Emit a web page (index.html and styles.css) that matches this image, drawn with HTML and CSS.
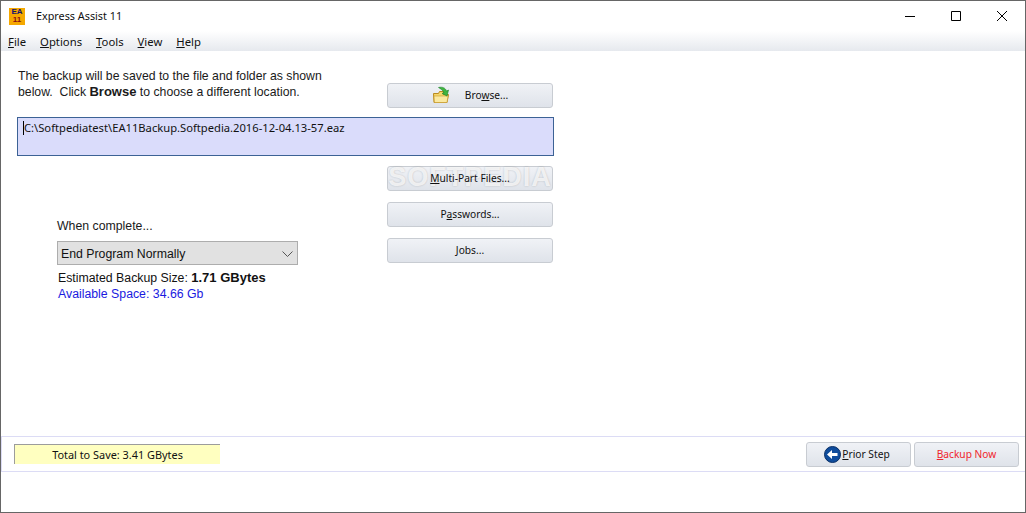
FILE: index.html
```html
<!DOCTYPE html>
<html lang="en">
<head>
<meta charset="utf-8">
<title>Express Assist 11</title>
<link rel="stylesheet" href="styles.css">
</head>
<body>
<div class="window">
  <header class="titlebar">
    <div class="logo"><span>EA</span><span class="logo-num">11</span></div>
    <div class="title">Express Assist 11</div>
    <div class="controls">
      <svg class="ctl" width="46" height="30" viewBox="0 0 46 30"><path d="M18 15.500h10" stroke="#000" fill="none"/></svg>
      <svg class="ctl" width="46" height="30" viewBox="0 0 46 30"><path d="M18.500 10.500h9v9h-9z" stroke="#000" fill="none"/></svg>
      <svg class="ctl" width="46" height="30" viewBox="0 0 46 30"><path d="M18 10l10 10M28 10l-10 10" stroke="#000" fill="none"/></svg>
    </div>
  </header>
  <nav class="menubar">
    <span class="menu"><u>F</u>ile</span>
    <span class="menu"><u>O</u>ptions</span>
    <span class="menu"><u>T</u>ools</span>
    <span class="menu"><u>V</u>iew</span>
    <span class="menu"><u>H</u>elp</span>
  </nav>
  <main class="main">
    <p class="intro">The backup will be saved to the file and folder as shown<br>below.&nbsp; Click <b>Browse</b> to choose a different location.</p>
    <button class="btn btn-browse">
      <svg class="folder" width="18" height="18" viewBox="0 0 18 18">
        <path d="M1.500 7.500h5l1-2h4v3h5l-1.500 8h-13z" fill="#f6d66a" stroke="#b98a1e"/>
        <path d="M2 10h14l-1 6.500H2.500z" fill="#fbe9a0" stroke="#c79a2c" stroke-width=".6"/>
        <path d="M6.500 1.500c4 -1 7 .5 8 3.500l2-1-1.500 6-5-2.500 2-1c-1-2-3-3.500-5.500-5z" fill="#3fb53f" stroke="#1f7f2a" stroke-width=".6"/>
      </svg>
      <span>Bro<u>w</u>se...</span>
    </button>
    <div class="path"><span class="caret"></span>C:\Softpediatest\EA11Backup.Softpedia.2016-12-04.13-57.eaz</div>
    <section class="options">
      <div class="when">When complete...</div>
      <div class="select"><span>End Program Normally</span>
        <svg width="11" height="6" viewBox="0 0 11 6"><path d="M.500 .500l5 5 5-5" stroke="#555" fill="none"/></svg>
      </div>
      <div class="size">Estimated Backup Size: <b>1.71 GBytes</b></div>
      <div class="space">Available Space: 34.66 Gb</div>
    </section>
    <div class="btn-stack">
      <button class="btn"><span class="label"><u>M</u>ulti-Part Files...</span></button>
      <button class="btn"><span class="label">P<u>a</u>sswords...</span></button>
      <button class="btn"><span class="label"><u>J</u>obs...</span></button>
      <div class="watermark">SOFTPEDIA</div>
    </div>
  </main>
  <footer class="footer">
    <div class="total">Total to Save: 3.41 GBytes</div>
    <div class="actions">
      <button class="btn btn-foot">
        <svg width="17" height="17" viewBox="0 0 17 17">
          <circle cx="8.500" cy="8.500" r="8" fill="#0f4c9c" stroke="#0a2f66"/>
          <path d="M3 8.500L8 4v3h5.500v3H8v3z" fill="#fff"/>
        </svg>
        <span><u>P</u>rior Step</span>
      </button>
      <button class="btn btn-foot btn-red"><span><u>B</u>ackup Now</span></button>
    </div>
  </footer>
  <div class="bottom"></div>
</div>
</body>
</html>
```
FILE: styles.css
```css
* { box-sizing: border-box; }
html, body { margin: 0; padding: 0; height: 100%; }
body { background: #fff; overflow: hidden; }
.window {
  width: 1026px; height: 513px;
  border: 1px solid #666;
  display: flex; flex-direction: column;
  font-family: "Noto Sans", sans-serif;
  font-size: 11px; color: #111;
  background: #fff;
}
.titlebar { height: 30px; display: flex; align-items: center; padding-left: 8px; flex: none; }
.logo {
  width: 16px; height: 17px; background: #f5a800; color: #14146e;
  font-family: "Liberation Sans", sans-serif; font-weight: bold; font-size: 8px; line-height: 8px;
  display: flex; flex-direction: column; align-items: center; justify-content: center;
}
.logo-num { color: #8a1010; }
.title { margin: -2px 0 0 11px; font-size: 10.800px; color: #111; }
.controls { margin-left: auto; display: flex; }
.ctl { display: block; }
.menubar {
  height: 20px; flex: none; display: flex; gap: 14px; align-items: center; padding-left: 7px;
  background: linear-gradient(#ffffff, #e6e9ee);
  font-size: 11.300px;
}
.main {
  flex: 1; display: grid;
  grid-template-columns: 370px 166px;
  grid-template-rows: 66px 48px auto;
  padding-left: 16px;
  align-content: start;
}
.intro {
  margin: 0; padding: 17px 0 0 1px;
  font-family: "Liberation Sans", sans-serif; font-size: 12.250px; line-height: 16px; color: #1a1a1a;
}
.intro b { font-size: 13px; }
.btn {
  height: 25px; width: 166px; padding: 0 0 2px;
  display: flex; align-items: center; justify-content: center;
  background: linear-gradient(#f0f2f6, #dfe3ea);
  border: 1px solid #c8ccd2; border-radius: 3px;
  font-family: "Noto Sans", sans-serif; font-size: 10.200px; color: #111;
}
.btn-browse { margin-top: 32px; gap: 15px; }
.folder { display: block; }
.path {
  grid-column: 1 / 3; width: 537px; height: 39px;
  align-self: start;
  background: #dadcfb; border: 1px solid #3c6295;
  padding: 2px 0 0 5px; font-size: 11.200px; line-height: 16px; color: #111;
}
.caret { display: inline-block; width: 1px; height: 14px; background: #000; vertical-align: -3px; }
.options { padding: 53px 0 0 40px; font-family: "Liberation Sans", sans-serif; font-size: 12.300px; }
.when { line-height: 16px; color: #1a1a1a; }
.select {
  width: 241px; height: 24px; margin-top: 7px;
  background: #e1e1e1; border: 1px solid #adadad;
  display: flex; align-items: center; justify-content: space-between;
  padding: 1px 3px 0; color: #111;
}
.select svg { margin-right: 1px; }
.size { margin: 4px 0 0 1px; line-height: 17px; }
.size b { font-size: 13px; }
.space { margin-left: 1px; line-height: 17px; margin-top: -1px; color: #1a1ae0; }
.btn-stack { display: flex; flex-direction: column; gap: 11px; padding-top: 1px; position: relative; }
.label { position: relative; z-index: 2; }
.watermark {
  position: absolute; left: -2px; top: -3px; width: 170px; text-align: center;
  font-family: "Liberation Sans", sans-serif; font-weight: bold; font-size: 27px; letter-spacing: 1px;
  color: rgba(255, 255, 255, .75); pointer-events: none; white-space: nowrap;
  text-shadow: 0 0 2px rgba(0, 0, 0, .2);
  z-index: 1;
}
.footer {
  height: 36px; flex: none; display: flex; align-items: center; justify-content: space-between;
  border: 1px solid #dcdcf5; border-right: 0;
  padding: 0 6px 0 12px;
}
.total {
  width: 206px; height: 20px; margin-top: -1px;
  background: #ffffc0; border-left: 1px solid #9c9c9c; border-top: 1px solid #9c9c9c;
  text-align: center; font-size: 10.900px; line-height: 19px; color: #111;
}
.actions { display: flex; gap: 3px; }
.btn-foot { width: 105px; gap: 1px; padding: 0 3px 0 0; }
.btn-red { color: #f0242c; padding: 0; }
.bottom { height: 40px; flex: none; }
```
